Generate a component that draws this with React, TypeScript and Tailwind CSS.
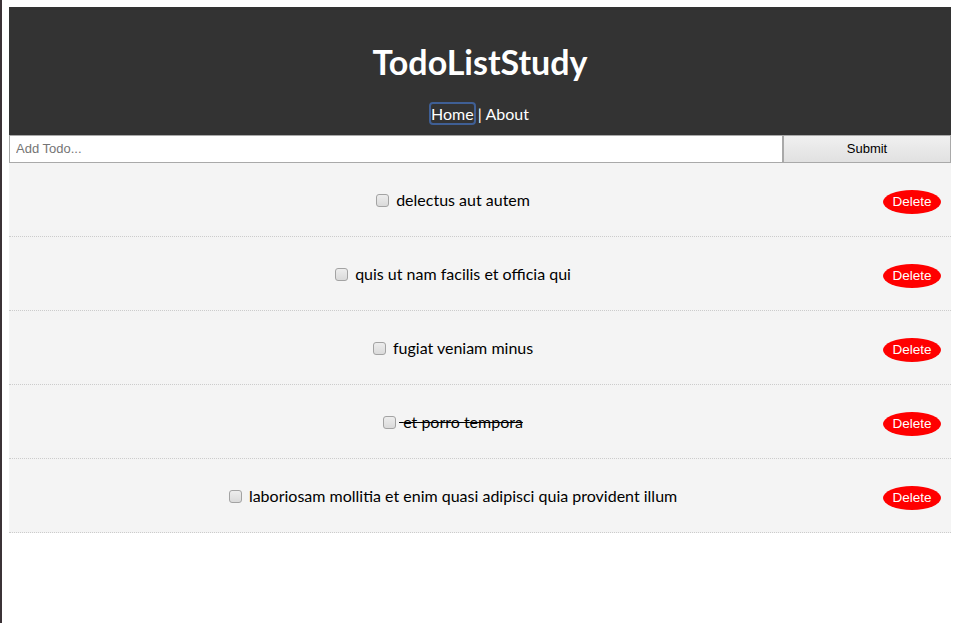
import React from "react";

const todos = [
  { id: 1, title: "delectus aut autem", completed: false },
  { id: 2, title: "quis ut nam facilis et officia qui", completed: false },
  { id: 3, title: "fugiat veniam minus", completed: false },
  { id: 4, title: "et porro tempora", completed: true },
  { id: 5, title: "laboriosam mollitia et enim quasi adipisci quia provident illum", completed: false },
];

export default function App() {
  return (
    <div className="min-h-screen border-l-2 border-[#3b3236] bg-white" style={{ fontFamily: "Lato, 'Noto Sans', sans-serif" }}>
      <div className="ml-[7px] mr-[8px] pt-[7px]">
        <header className="bg-[#333333] text-white text-center pt-[33px] pb-[11px]">
          <h1 className="text-[34px] leading-[43px] font-bold">TodoListStudy</h1>
          <nav className="mt-[20px] text-[16px] leading-[21px]">
            <a href="#" className="text-white no-underline rounded-[2px] outline-2 outline-solid outline-[#3f5f95]">Home</a>
            <span> | </span>
            <a href="#" className="text-white no-underline">About</a>
          </nav>
        </header>
        <form className="flex h-[28px]" onSubmit={(e) => e.preventDefault()}>
          <input
            type="text"
            placeholder="Add Todo..."
            className="flex-1 min-w-0 border border-[#a9a9a9] px-[6px] text-[13px] text-black placeholder:text-[#757575] bg-white outline-none"
            style={{ fontFamily: "'Liberation Sans', Arial, sans-serif" }}
          />
          <button
            type="submit"
            className="w-[168px] border border-[#a9a9a9] bg-gradient-to-b from-[#f0f0f0] to-[#e1e1e1] text-[13px] text-black"
            style={{ fontFamily: "'Liberation Sans', Arial, sans-serif" }}
          >
            Submit
          </button>
        </form>
        <div>
          {todos.map((t) => (
            <div key={t.id} className="bg-[#f4f4f4] px-[10px] py-[10px] border-b border-dotted border-[#cccccc]">
              <p className={"my-[16px] text-center text-[16px] leading-[21px] text-black " + (t.completed ? "line-through" : "")}>
                <input
                  type="checkbox"
                  className="appearance-none inline-block ml-[4px] mr-[3px] w-[13px] h-[13px] align-[-1px] rounded-[3px] border border-[#a3a3a3] bg-gradient-to-b from-[#ededed] to-[#dadada]"
                />
                {" "}
                {t.title}
                <button
                  className="float-right w-[58px] h-[24px] rounded-[50%] bg-[#ff0000] text-white text-[13.5px] leading-[24px] mt-[1px]"
                  style={{ fontFamily: "'Liberation Sans', Arial, sans-serif" }}
                >
                  Delete
                </button>
              </p>
            </div>
          ))}
        </div>
      </div>
    </div>
  );
}
